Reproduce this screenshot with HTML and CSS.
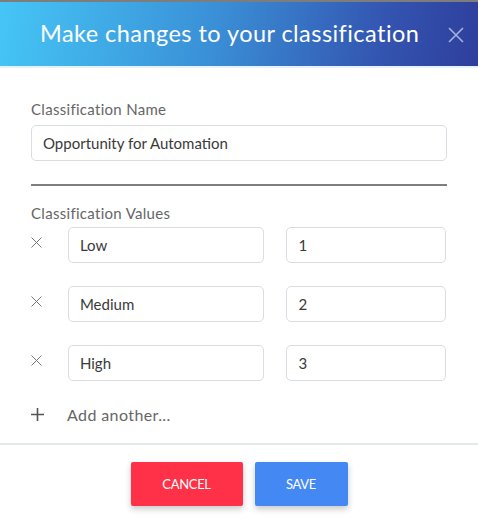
FILE: index.html
```html
<!DOCTYPE html>
<html>
<head>
<meta charset="utf-8">
<link rel="stylesheet" href="styles.css">
</head>
<body>
<div class="topstrip"></div>
<div class="dialog">
  <header class="header">
    <h1 class="title">Make changes to your classification</h1>
    <span class="close" aria-label="Close">
      <svg width="16" height="16" viewBox="0 0 16 16"><path d="M1 1L15 15M15 1L1 15" stroke="#a3b3dc" stroke-width="1.6" fill="none"/></svg>
    </span>
  </header>
  <main class="body">
    <label class="label">Classification Name</label>
    <div class="input wide">Opportunity for Automation</div>
    <hr class="divider">
    <label class="label label2">Classification Values</label>
    <div class="rows">
      <div class="row">
        <span class="remove"><svg width="11" height="11" viewBox="0 0 11 11"><path d="M0.5 0.5L10.5 10.5M10.5 0.5L0.5 10.5" stroke="#777" stroke-width="1" fill="none"/></svg></span>
        <div class="input name">Low</div>
        <div class="input val">1</div>
      </div>
      <div class="row">
        <span class="remove"><svg width="11" height="11" viewBox="0 0 11 11"><path d="M0.5 0.5L10.5 10.5M10.5 0.5L0.5 10.5" stroke="#777" stroke-width="1" fill="none"/></svg></span>
        <div class="input name">Medium</div>
        <div class="input val">2</div>
      </div>
      <div class="row">
        <span class="remove"><svg width="11" height="11" viewBox="0 0 11 11"><path d="M0.5 0.5L10.5 10.5M10.5 0.5L0.5 10.5" stroke="#777" stroke-width="1" fill="none"/></svg></span>
        <div class="input name">High</div>
        <div class="input val">3</div>
      </div>
    </div>
    <div class="add">
      <span class="plus"><svg width="13" height="13" viewBox="0 0 13 13"><path d="M6.5 0V13M0 6.5H13" stroke="#555" stroke-width="1.6" fill="none"/></svg></span>
      <span class="addtext">Add another...</span>
    </div>
  </main>
  <footer class="footer">
    <button class="btn cancel">CANCEL</button>
    <button class="btn save">SAVE</button>
  </footer>
</div>
</body>
</html>
```

FILE: styles.css
```css
html, body {
  margin: 0;
  padding: 0;
  background: #fff;
}
body {
  font-family: Lato, "Open Sans", sans-serif;
  width: 478px;
  height: 522px;
  overflow: hidden;
}
.topstrip {
  height: 2px;
  background: #7d7d7d;
}
.header {
  height: 64px;
  background: linear-gradient(100deg, #45c6f6 0%, #3a8fd6 45%, #3354b0 80%, #2f3e9c 100%);
  border-bottom: 2px solid #e6f2fb;
  display: flex;
  align-items: center;
  position: relative;
}
.title {
  margin: 0;
  padding-left: 40px;
  color: #fff;
  font-weight: 400;
  font-size: 23.5px;
  letter-spacing: 0.45px;
  padding-bottom: 2px;
}
.close {
  position: absolute;
  right: 14px;
  top: 25px;
  width: 16px;
  height: 16px;
  display: flex;
}
.body {
  padding: 32px 32px 0 31px;
}
.label {
  display: block;
  color: #666;
  font-size: 15px;
  letter-spacing: 0.3px;
  line-height: 18px;
  height: 18px;
}
.input {
  box-sizing: border-box;
  border: 1px solid #d9dde2;
  border-radius: 5px;
  height: 36px;
  display: flex;
  align-items: center;
  padding-left: 11px;
  font-size: 15px;
  color: #3a3a3a;
}
.wide {
  margin-top: 7px;
  width: 416px;
}
.divider {
  margin: 23px 0 0 0;
  border: 0;
  height: 2px;
  width: 416px;
  background: #7f7f7f;
}
.label2 {
  margin-top: 18px;
}
.rows {
  margin-top: 5px;
  display: flex;
  flex-direction: column;
  gap: 23px;
}
.row {
  display: flex;
  align-items: flex-start;
}
.remove {
  width: 37px;
  padding-top: 10px;
  display: flex;
}
.name {
  width: 197px;
}
.val {
  width: 160px;
  margin-left: 22px;
}
.add {
  margin-top: 22px;
  display: flex;
  align-items: center;
  height: 22px;
}
.plus {
  width: 36px;
  display: flex;
}
.addtext {
  color: #666;
  font-size: 16px;
  letter-spacing: 0.4px;
}
.footer {
  margin-top: 18px;
  border-top: 2px solid #e3e8ee;
  display: flex;
  justify-content: center;
  gap: 12px;
  padding-top: 17px;
}
.btn {
  border: 0;
  height: 44px;
  color: #fff;
  font-family: Lato, sans-serif;
  font-size: 13px;
  letter-spacing: -0.3px;
  border-radius: 2px;
  box-shadow: 0 3px 6px rgba(0,0,0,0.22);
  padding: 0;
}
.cancel {
  width: 112px;
  background: #ff3148;
}
.save {
  width: 93px;
  background: #4388f3;
}
```
